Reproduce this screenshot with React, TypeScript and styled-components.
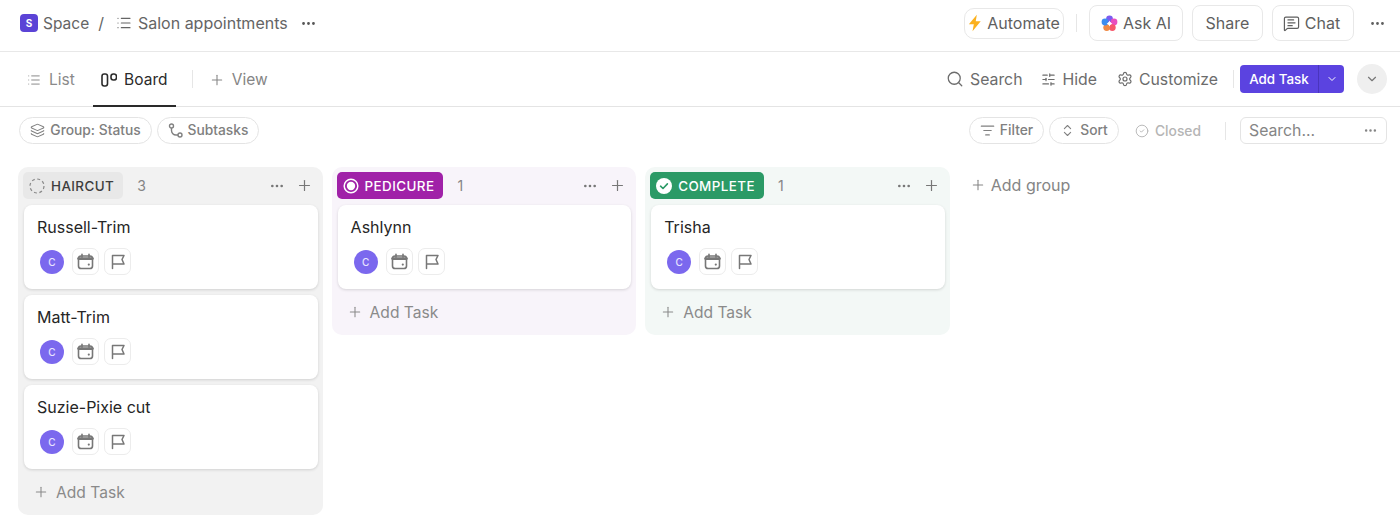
import styled, { createGlobalStyle } from "styled-components";
import {
  ChevronDown,
  ChevronsUpDown,
  CircleCheck,
  Ellipsis,
  Layers,
  List,
  ListFilter,
  MessageSquareText,
  Plus,
  Search,
  Settings,
  SlidersHorizontal,
} from "lucide-react";

const GlobalStyle = createGlobalStyle`
  * { box-sizing: border-box; }
  html, body { margin: 0; padding: 0; background: #fff; }
  body {
    font-family: Inter, "Liberation Sans", sans-serif;
    color: #5f5f5f;
    overflow: hidden;
  }
`;

const Page = styled.div`
  width: 1400px;
  height: 521px;
  overflow: hidden;
`;

const TopBar = styled.header`
  height: 52px;
  padding: 0 14px 5px 20px;
  display: flex;
  align-items: center;
  justify-content: space-between;
  border-bottom: 1px solid #e8e8e8;
`;

const Crumbs = styled.div`
  display: flex;
  align-items: center;
  font-size: 15.5px;
  color: #656565;
`;

const CrumbTitle = styled.span`
  font-size: 16px;
`;

const SpaceBadge = styled.span`
  width: 18px;
  height: 18px;
  margin-right: 5px;
  border-radius: 4px;
  background: #5b43d6;
  color: #fff;
  font-size: 10px;
  font-weight: 700;
  display: flex;
  align-items: center;
  justify-content: center;
`;

const Slash = styled.span`
  margin: 0 12px 0 9px;
  font-size: 16px;
`;

const CrumbMore = styled.span`
  margin-left: 12px;
  display: flex;
  color: #555;
`;

const TopActions = styled.div`
  display: flex;
  align-items: center;
`;

const TopButton = styled.div<{ $h?: number; $w: number; $mr?: number; $radius?: number }>`
  width: ${(p) => p.$w}px;
  height: ${(p) => p.$h ?? 36}px;
  margin-right: ${(p) => p.$mr ?? 9}px;
  border: 1px solid #e8e8e8;
  border-radius: ${(p) => p.$radius ?? 8}px;
  display: flex;
  align-items: center;
  justify-content: center;
  gap: 5px;
  font-size: 16px;
  color: #5f5f5f;
`;

const ChatButton = styled(TopButton)`
  padding-right: 3px;
`;

const VLine = styled.span<{ $h: number; $ml: number; $mr: number }>`
  width: 1px;
  height: ${(p) => p.$h}px;
  margin: 0 ${(p) => p.$mr}px 0 ${(p) => p.$ml}px;
  background: #e6e6e6;
`;

const TabBar = styled.nav`
  height: 55px;
  padding: 0 13px 0 27px;
  display: flex;
  align-items: center;
  justify-content: space-between;
  border-bottom: 1px solid #e4e4e4;
`;

const Tabs = styled.div`
  display: flex;
  align-items: center;
  height: 100%;
`;

const Tab = styled.div<{ $active?: boolean; $w?: number }>`
  height: 100%;
  padding-top: 2px;
  width: ${(p) => (p.$w ? `${p.$w}px` : "auto")};
  display: flex;
  align-items: center;
  justify-content: center;
  gap: 7px;
  font-size: 15.5px;
  color: ${(p) => (p.$active ? "#2b2b2b" : "#8a8a8a")};
  border-bottom: 2px solid ${(p) => (p.$active ? "#2a2a2a" : "transparent")};
  margin-bottom: -1px;
`;

const ViewTab = styled(Tab)`
  color: #858585;
  gap: 7px;
`;

const ListTab = styled(Tab)`
  margin-right: 18px;
  gap: 8px;
`;

const TabTools = styled.div`
  display: flex;
  align-items: center;
`;

const Tool = styled.div<{ $mr: number }>`
  display: flex;
  align-items: center;
  gap: 6px;
  margin-right: ${(p) => p.$mr}px;
  font-size: 15.8px;
  color: #6c6c6c;
`;

const AddTaskButton = styled.div`
  width: 104px;
  height: 28px;
  border-radius: 4px;
  background: #5b43e0;
  color: #fff;
  display: flex;
  font-size: 13.4px;
  font-weight: 500;
`;

const AddTaskLabel = styled.span`
  width: 79px;
  display: flex;
  align-items: center;
  justify-content: center;
  border-right: 1px solid #4a35bd;
`;

const AddTaskCaret = styled.span`
  flex: 1;
  display: flex;
  align-items: center;
  justify-content: center;
`;

const RoundToggle = styled.div`
  width: 30px;
  height: 30px;
  margin-left: 13px;
  border-radius: 50%;
  background: #efefef;
  color: #777;
  display: flex;
  align-items: center;
  justify-content: center;
`;

const FilterBar = styled.div`
  height: 47px;
  padding: 10px 13px 0 19px;
  display: flex;
  align-items: flex-start;
  justify-content: space-between;
`;

const PillGroup = styled.div`
  display: flex;
  align-items: center;
`;

const Pill = styled.div<{ $w: number; $mr?: number }>`
  width: ${(p) => p.$w}px;
  height: 27px;
  padding-bottom: 1px;
  margin-right: ${(p) => p.$mr ?? 5}px;
  border: 1px solid #e4e4e4;
  border-radius: 14px;
  display: flex;
  align-items: center;
  justify-content: center;
  gap: 5px;
  font-size: 13.8px;
  font-weight: 500;
  color: #808080;
`;

const ClosedLabel = styled.div`
  display: flex;
  align-items: center;
  gap: 6px;
  margin-left: 10px;
  font-size: 13.8px;
  font-weight: 500;
  color: #b5b5b5;
`;

const SearchBox = styled.div`
  width: 147px;
  height: 27px;
  padding: 0 8px;
  border: 1px solid #e4e4e4;
  border-radius: 6px;
  display: flex;
  align-items: center;
  justify-content: space-between;
  font-size: 15.8px;
  color: #858585;
`;

const Board = styled.main`
  padding: 13px 0 0 18px;
  display: flex;
  align-items: flex-start;
  gap: 9px;
`;

const Column = styled.section<{ $bg: string }>`
  width: 304.6px;
  padding: 5px 5px 14px 6px;
  border-radius: 10px;
  background: ${(p) => p.$bg};
`;

const ColumnHead = styled.div`
  height: 27px;
  margin: 0 0 6px;
  padding-right: 5px;
  display: flex;
  align-items: center;
`;

const StatusTag = styled.div<{ $bg: string; $fg: string }>`
  height: 27px;
  padding: 0 9px 0 6px;
  margin-left: -1px;
  border-radius: 5px;
  background: ${(p) => p.$bg};
  color: ${(p) => p.$fg};
  display: flex;
  align-items: center;
  gap: 6px;
  font-size: 13.4px;
  font-weight: 500;
  letter-spacing: 0.42px;
`;

const Count = styled.span`
  margin-left: 14px;
  font-size: 14px;
  color: #858585;
`;

const HeadTools = styled.div`
  margin-left: auto;
  display: flex;
  align-items: center;
  gap: 11px;
  color: #777;
`;

const Cards = styled.div`
  display: flex;
  flex-direction: column;
  gap: 6px;
`;

const Card = styled.article`
  height: 84px;
  padding: 13px 13px 0;
  border-radius: 8px;
  background: #fff;
  box-shadow: 0 1px 3px rgba(0, 0, 0, 0.14);
`;

const CardTitle = styled.div`
  height: 18px;
  font-size: 16px;
  line-height: 18px;
  color: #262626;
`;

const CardMeta = styled.div`
  margin-top: 12px;
  padding-left: 3px;
  display: flex;
  align-items: center;
  gap: 5px;
`;

const Avatar = styled.span`
  width: 24px;
  height: 24px;
  margin-right: 3px;
  border-radius: 50%;
  background: #7b68ee;
  color: #e8e4ff;
  font-size: 10px;
  font-weight: 500;
  display: flex;
  align-items: center;
  justify-content: center;
`;

const MetaChip = styled.span`
  width: 27px;
  height: 27px;
  border: 1px solid #ececec;
  border-radius: 7px;
  color: #777;
  display: flex;
  align-items: center;
  justify-content: center;
`;

const AddRow = styled.div`
  margin-top: 14px;
  height: 18px;
  padding-left: 9px;
  display: flex;
  align-items: center;
  gap: 7px;
  font-size: 15.6px;
  color: #8a8a8a;
`;

const AddGroup = styled.div`
  height: 35px;
  margin-left: 11px;
  display: flex;
  align-items: center;
  gap: 5px;
  font-size: 16px;
  color: #858585;
`;

const BoardIcon = () => (
  <svg width="16" height="16" viewBox="0 0 16 16" fill="none" stroke="currentColor" strokeWidth="1.6">
    <rect x="1" y="2" width="5.5" height="12" rx="2.2" />
    <rect x="10" y="2" width="5.5" height="6" rx="2.4" />
  </svg>
);

const BoltIcon = () => (
  <svg width="14" height="18" viewBox="0 0 13 16">
    <path d="M8.2 0.4 0.8 9.2h4.6L4.2 15.6l7.6-9.2H7.2z" fill="#fbb11f" />
  </svg>
);

const AiIcon = () => (
  <svg width="17" height="17" viewBox="0 0 17 17">
    <circle cx="8.5" cy="3.8" r="3.4" fill="#7a5cf0" />
    <circle cx="13" cy="7" r="3.4" fill="#e84fc0" />
    <circle cx="11.3" cy="12.6" r="3.4" fill="#f7576b" />
    <circle cx="5.7" cy="12.6" r="3.4" fill="#f08a45" />
    <circle cx="4" cy="7" r="3.4" fill="#3c8df0" />
    <path d="M8.5 5.6 9.4 7.6 11.4 8.5 9.4 9.4 8.5 11.4 7.6 9.4 5.6 8.5 7.6 7.6z" fill="#fff" />
  </svg>
);

const CalendarIcon = () => (
  <svg width="17" height="17" viewBox="0 0 17 17" fill="none" stroke="currentColor" strokeWidth="1.6" strokeLinecap="round">
    <rect x="1.5" y="3" width="14" height="12.5" rx="2.6" />
    <path d="M1.5 5.6h14" strokeWidth="2.6" />
    <path d="M5 1.2v3M12 1.2v3" />
    <circle cx="11.8" cy="11.6" r="1.1" fill="currentColor" stroke="none" />
  </svg>
);

const FlagIcon = () => (
  <svg width="17" height="17" viewBox="0 0 17 17" fill="none" stroke="currentColor" strokeWidth="1.5" strokeLinecap="round" strokeLinejoin="round">
    <path d="M3.5 15.5V2.5h11.5l-2 4 2 4.5H3.5" />
  </svg>
);

const SubtasksIcon = () => (
  <svg width="15" height="15" viewBox="0 0 15 15" fill="none" stroke="currentColor" strokeWidth="1.4">
    <circle cx="3.5" cy="3" r="2" />
    <circle cx="12" cy="12" r="2" />
    <path d="M3.5 5v2.5a4.5 4.5 0 0 0 4.5 4.5h2" />
  </svg>
);

const DashedRing = () => (
  <svg width="16" height="16" viewBox="0 0 16 16" fill="none" stroke="#8a8a8a" strokeWidth="1.2">
    <circle cx="8" cy="8" r="7" strokeDasharray="3 2.5" />
  </svg>
);

const TargetRing = () => (
  <svg width="16" height="16" viewBox="0 0 16 16">
    <circle cx="8" cy="8" r="6.8" fill="none" stroke="#fff" strokeWidth="1.5" />
    <circle cx="8" cy="8" r="4.2" fill="#fff" />
  </svg>
);

const CheckDisc = () => (
  <svg width="16" height="16" viewBox="0 0 16 16">
    <circle cx="8" cy="8" r="8" fill="#fff" />
    <path d="M4.6 8.2 7 10.5l4.4-4.6" fill="none" stroke="#2b9a66" strokeWidth="1.6" strokeLinecap="round" strokeLinejoin="round" />
  </svg>
);

type Status = {
  name: string;
  bg: string;
  tagBg: string;
  tagFg: string;
  icon: React.ReactNode;
  tasks: string[];
};

const statuses: Status[] = [
  {
    name: "HAIRCUT",
    bg: "#f2f2f2",
    tagBg: "#e8e8e8",
    tagFg: "#3d3d3d",
    icon: <DashedRing />,
    tasks: ["Russell-Trim", "Matt-Trim", "Suzie-Pixie cut"],
  },
  {
    name: "PEDICURE",
    bg: "#f8f4fa",
    tagBg: "#a021a8",
    tagFg: "#fff",
    icon: <TargetRing />,
    tasks: ["Ashlynn"],
  },
  {
    name: "COMPLETE",
    bg: "#f3f8f6",
    tagBg: "#2b9a66",
    tagFg: "#fff",
    icon: <CheckDisc />,
    tasks: ["Trisha"],
  },
];

export default function App() {
  return (
    <Page>
      <GlobalStyle />
      <TopBar>
        <Crumbs>
          <SpaceBadge>S</SpaceBadge>
          Space
          <Slash>/</Slash>
          <List size={16} strokeWidth={1.8} style={{ marginRight: 6 }} />
          <CrumbTitle>Salon appointments</CrumbTitle>
          <CrumbMore><Ellipsis size={17} /></CrumbMore>
        </Crumbs>
        <TopActions>
          <TopButton $w={100} $h={31} $mr={0} $radius={10}><BoltIcon />Automate</TopButton>
          <VLine $h={18} $ml={12} $mr={12} />
          <TopButton $w={94}><AiIcon />Ask AI</TopButton>
          <TopButton $w={71}>Share</TopButton>
          <ChatButton $w={82} $mr={15}><MessageSquareText size={17} strokeWidth={1.7} />Chat</ChatButton>
          <Ellipsis size={17} />
        </TopActions>
      </TopBar>

      <TabBar>
        <Tabs>
          <ListTab><List size={14} strokeWidth={1.7} />List</ListTab>
          <Tab $active $w={83}><BoardIcon />Board</Tab>
          <VLine $h={18} $ml={16} $mr={16} />
          <ViewTab><Plus size={16} strokeWidth={1.6} />View</ViewTab>
        </Tabs>
        <TabTools>
          <Tool $mr={19}><Search size={18} strokeWidth={1.7} />Search</Tool>
          <Tool $mr={20}><SlidersHorizontal size={15} strokeWidth={1.8} />Hide</Tool>
          <Tool $mr={0}><Settings size={16} strokeWidth={1.8} />Customize</Tool>
          <VLine $h={18} $ml={15} $mr={6} />
          <AddTaskButton>
            <AddTaskLabel>Add Task</AddTaskLabel>
            <AddTaskCaret><ChevronDown size={12} /></AddTaskCaret>
          </AddTaskButton>
          <RoundToggle><ChevronDown size={14} /></RoundToggle>
        </TabTools>
      </TabBar>

      <FilterBar>
        <PillGroup>
          <Pill $w={133}><Layers size={15} strokeWidth={1.7} />Group: Status</Pill>
          <Pill $w={102}><SubtasksIcon />Subtasks</Pill>
        </PillGroup>
        <PillGroup>
          <Pill $w={75}><ListFilter size={15} strokeWidth={1.7} />Filter</Pill>
          <Pill $w={70} $mr={6}><ChevronsUpDown size={15} strokeWidth={1.7} />Sort</Pill>
          <ClosedLabel><CircleCheck size={14} strokeWidth={1.6} />Closed</ClosedLabel>
          <VLine $h={18} $ml={24} $mr={14} />
          <SearchBox>Search...<Ellipsis size={15} /></SearchBox>
        </PillGroup>
      </FilterBar>

      <Board>
        {statuses.map((s) => (
          <Column key={s.name} $bg={s.bg}>
            <ColumnHead>
              <StatusTag $bg={s.tagBg} $fg={s.tagFg}>{s.icon}{s.name}</StatusTag>
              <Count>{s.tasks.length}</Count>
              <HeadTools>
                <Ellipsis size={16} />
                <Plus size={17} strokeWidth={1.7} />
              </HeadTools>
            </ColumnHead>
            <Cards>
              {s.tasks.map((t) => (
                <Card key={t}>
                  <CardTitle>{t}</CardTitle>
                  <CardMeta>
                    <Avatar>C</Avatar>
                    <MetaChip><CalendarIcon /></MetaChip>
                    <MetaChip><FlagIcon /></MetaChip>
                  </CardMeta>
                </Card>
              ))}
            </Cards>
            <AddRow><Plus size={16} strokeWidth={1.6} />Add Task</AddRow>
          </Column>
        ))}
        <AddGroup><Plus size={16} strokeWidth={1.6} />Add group</AddGroup>
      </Board>
    </Page>
  );
}
